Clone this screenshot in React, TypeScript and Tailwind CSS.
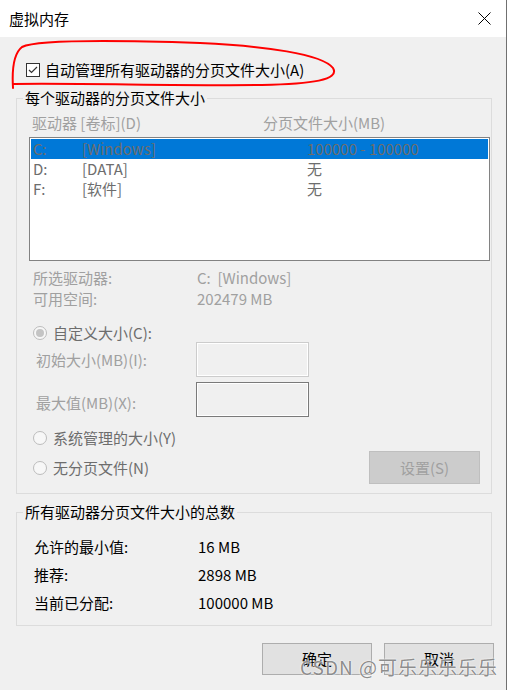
import React from "react";

const FONT = "font-['Noto_Sans_CJK_SC','Noto_Sans',sans-serif]";

function Radio({ checked }: { checked?: boolean }) {
  return (
    <span className="flex h-[14px] w-[14px] shrink-0 items-center justify-center rounded-full border border-[#bcbcbc] bg-[#f7f7f7]">
      {checked && <span className="h-[8px] w-[8px] rounded-full bg-[#c4c4c4]" />}
    </span>
  );
}

function Group({ title, children, className }: { title: string; children: React.ReactNode; className?: string }) {
  return (
    <fieldset className={`ml-[16px] w-[476px] border border-[#dcdcdc] ${className ?? ""}`}>
      <legend className="ml-[6px] px-[2px] text-[15px] leading-[20px] text-black">{title}</legend>
      {children}
    </fieldset>
  );
}

export default function App() {
  const rows = [
    { d: "C:", l: "[Windows]", s: "100000 - 100000", sel: true },
    { d: "D:", l: "[DATA]", s: "无", sel: false },
    { d: "F:", l: "[软件]", s: "无", sel: false },
  ];
  return (
    <div className={`relative h-[690px] w-[507px] border-r border-[#707070] bg-[#f0f0f0] ${FONT} text-[15px] leading-[20px]`}>
      {/* title bar */}
      <div className="flex h-[37px] items-center justify-between bg-white pl-[9px] pr-[15px]">
        <span className="text-[15px] text-black">虚拟内存</span>
        <svg width="13" height="13" viewBox="0 0 13 13" className="mt-[-1px]">
          <path d="M0.5 0.5 L12.5 12.5 M12.5 0.5 L0.5 12.5" stroke="#000" strokeWidth="1" />
        </svg>
      </div>

      {/* auto manage checkbox */}
      <div className="mt-[23px] flex h-[20px] items-center pl-[26px]">
        <span className="flex h-[14px] w-[14px] items-center justify-center border border-[#333333] bg-white">
          <svg width="12" height="12" viewBox="0 0 12 12">
            <path d="M2 6 L4.5 8.5 L10 3" fill="none" stroke="#333" strokeWidth="1.2" />
          </svg>
        </span>
        <span className="ml-[5px] text-black">自动管理所有驱动器的分页文件大小(A)</span>
      </div>

      {/* group 1 */}
      <Group title="每个驱动器的分页文件大小" className="mt-[8px] pb-[9px]">
        <div className="mt-[5px] flex h-[20px] items-center text-[#a0a0a0]">
          <span className="w-[246px] pl-[15px]">驱动器 [卷标](D)</span>
          <span>分页文件大小(MB)</span>
        </div>
        <div className="ml-[12px] mt-[4px] h-[124px] w-[461px] border border-[#828282] bg-white p-[1px]">
          {rows.map((r) => (
            <div
              key={r.d}
              className={`flex h-[20px] items-center pl-[2px] text-[#6d6d6d] ${r.sel ? "bg-[#0078d7]" : ""}`}
            >
              <span className="w-[49px]">{r.d}</span>
              <span className="w-[225px]">{r.l}</span>
              <span>{r.s}</span>
            </div>
          ))}
        </div>

        <div className="mt-[7px] flex h-[20px] items-center pl-[16px] text-[#a0a0a0]">
          <span className="w-[164px]">所选驱动器:</span>
          <span>C:&nbsp;&nbsp;[Windows]</span>
        </div>
        <div className="mt-[1px] flex h-[20px] items-center pl-[16px] text-[#a0a0a0]">
          <span className="w-[164px]">可用空间:</span>
          <span>202479 MB</span>
        </div>

        <div className="mt-[14px] flex h-[20px] items-center pl-[16px] text-[#6d6d6d]">
          <Radio checked />
          <span className="ml-[6px]">自定义大小(C):</span>
        </div>

        <div className="mt-[-1px] flex h-[35px] items-center pl-[19px] text-[#a0a0a0]">
          <span className="w-[160px]">初始大小(MB)(I):</span>
          <span className="h-[35px] w-[113px] border border-[#cccccc] shadow-[inset_0_0_0_1px_#ffffff]" />
        </div>
        <div className="mt-[5px] flex h-[35px] items-center pl-[19px] text-[#a0a0a0]">
          <span className="w-[160px] pt-[6px]">最大值(MB)(X):</span>
          <span className="h-[35px] w-[113px] border border-[#7a7a7a] shadow-[inset_0_0_0_1px_#ffffff]" />
        </div>

        <div className="mt-[11px] flex h-[20px] items-center pl-[16px] text-[#6d6d6d]">
          <Radio />
          <span className="ml-[6px]">系统管理的大小(Y)</span>
        </div>
        <div className="mt-[3px] flex h-[33px] items-center justify-between pl-[16px] pr-[11px] text-[#6d6d6d]">
          <div className="flex items-center">
            <Radio />
            <span className="ml-[6px]">无分页文件(N)</span>
          </div>
          <button className="h-[33px] w-[111px] border border-[#bfbfbf] bg-[#cccccc] text-[#a0a0a0]">设置(S)</button>
        </div>
      </Group>

      {/* group 2 */}
      <Group title="所有驱动器分页文件大小的总数" className="mt-[8px] pb-[12px]">
        <div className="mt-[15px] flex flex-col gap-[8px] pl-[17px] text-black">
          <div className="flex h-[20px] items-center">
            <span className="w-[164px]">允许的最小值:</span>
            <span>16 MB</span>
          </div>
          <div className="flex h-[20px] items-center">
            <span className="w-[164px]">推荐:</span>
            <span>2898 MB</span>
          </div>
          <div className="flex h-[20px] items-center">
            <span className="w-[164px]">当前已分配:</span>
            <span>100000 MB</span>
          </div>
        </div>
      </Group>

      {/* buttons */}
      <div className="mt-[17px] flex justify-end gap-[12px] pr-[12px]">
        <button className="h-[32px] w-[110px] border border-[#adadad] bg-[#e1e1e1] text-black">确定</button>
        <button className="h-[32px] w-[110px] border border-[#adadad] bg-[#e1e1e1] text-black">取消</button>
      </div>

      {/* red hand-drawn annotation */}
      <svg className="pointer-events-none absolute left-0 top-0" width="507" height="110" viewBox="0 0 507 110">
        <path
          d="M13 88 C12 72 13 54 22 47 C36 40 110 40 200 43 C265 46 322 54 333 68 C340 80 312 84 262 85 C180 86 80 83 14 84"
          fill="none"
          stroke="#ff0000"
          strokeWidth="2"
          strokeLinecap="round"
        />
      </svg>

      {/* watermark */}
      <span className="pointer-events-none absolute left-[300px] top-[657px] text-[19px] leading-[20px] tracking-[1px] text-[rgba(110,110,110,0.8)] [text-shadow:0_0_1px_#fff,0_0_2px_#fff]">
        CSDN @可乐乐乐乐乐
      </span>
    </div>
  );
}
